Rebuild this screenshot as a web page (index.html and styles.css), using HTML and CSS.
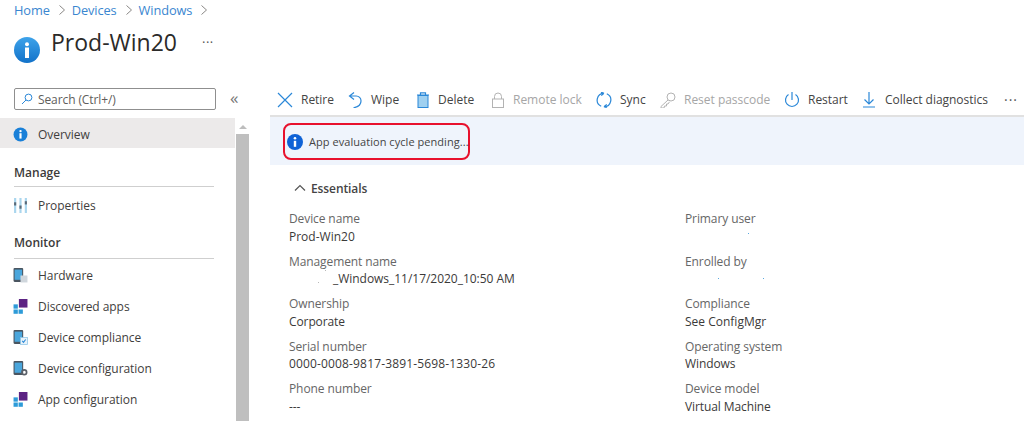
FILE: index.html
```html
<!DOCTYPE html>
<html lang="en">
<head>
<meta charset="utf-8">
<title>Prod-Win20</title>
<link rel="stylesheet" href="styles.css">
</head>
<body>
<header class="top">
  <nav class="crumbs">
    <a>Home</a><svg class="chev" viewBox="0 0 8 12"><path d="M1.5 1.5 6.5 6l-5 4.5"/></svg>
    <a>Devices</a><svg class="chev" viewBox="0 0 8 12"><path d="M1.5 1.5 6.5 6l-5 4.5"/></svg>
    <a>Windows</a><svg class="chev" viewBox="0 0 8 12"><path d="M1.5 1.5 6.5 6l-5 4.5"/></svg>
  </nav>
  <div class="title-row">
    <svg class="title-icon" viewBox="0 0 26 26"><defs><linearGradient id="g" x1="0" y1="0" x2="0" y2="1"><stop offset="0" stop-color="#3ea3ea"/><stop offset="1" stop-color="#1272c9"/></linearGradient></defs><circle cx="13" cy="13" r="13" fill="url(#g)"/><circle cx="13" cy="7.2" r="2" fill="#fff"/><rect x="11" y="10.5" width="4" height="10.5" fill="#fff"/></svg>
    <h1>Prod-Win20</h1>
    <span class="title-more">···</span>
  </div>
</header>
<div class="columns">
  <aside class="side">
    <div class="search-row">
      <div class="search">
        <svg class="search-ic" viewBox="0 0 12 12"><circle cx="7.5" cy="4.5" r="3.4"/><path d="M5 7 1 11"/></svg>
        <span>Search (Ctrl+/)</span>
      </div>
      <span class="collapse">«</span>
    </div>
    <div class="side-body">
      <div class="menu">
        <div class="item active">
          <svg class="mi" viewBox="0 0 14 14"><circle cx="7" cy="7" r="6.5" fill="#1a80d8"/><circle cx="7" cy="3.8" r="1.1" fill="#fff"/><rect x="6" y="5.8" width="2" height="5" fill="#fff"/></svg>
          <span>Overview</span>
        </div>
        <div class="group first">Manage</div>
        <div class="item lead">
          <svg class="mi" viewBox="0 0 14 14"><g fill="#a9d6ee"><rect x="1" y="0" width="2" height="14"/><rect x="6" y="0" width="2" height="14"/><rect x="11" y="0" width="2" height="14"/></g><g fill="#5a6a78"><rect x="1" y="4" width="2" height="3"/><rect x="6" y="7" width="2" height="3"/><rect x="11" y="3" width="2" height="3"/></g></svg>
          <span>Properties</span>
        </div>
        <div class="group second">Monitor</div>
        <div class="item hw">
          <svg class="mi" viewBox="0 0 14 14"><rect x="0.500" y="0" width="9" height="13" rx="1" fill="#4a5560"/><rect x="1.500" y="1.500" width="7" height="9.500" fill="#4aa6dc"/><rect x="7" y="7" width="6.500" height="6.500" fill="#cfd6dc"/></svg>
          <span>Hardware</span>
        </div>
        <div class="item tight">
          <svg class="mi" viewBox="0 0 14 14"><rect x="5.5" y="0" width="8" height="8" fill="#5c2383"/><g fill="#2d9bd8"><rect x="0.5" y="5" width="4" height="4"/><rect x="0.5" y="9.8" width="4" height="4"/><rect x="5.2" y="9.8" width="4" height="4"/></g></svg>
          <span>Discovered apps</span>
        </div>
        <div class="item tight">
          <svg class="mi" viewBox="0 0 14 14"><rect x="0.500" y="0" width="9" height="13" rx="1" fill="#4a5560"/><rect x="1.500" y="1.500" width="7" height="9.500" fill="#4aa6dc"/><rect x="7" y="7" width="6.500" height="6.500" fill="#e8f3fa" stroke="#8cc4e6" stroke-width=".7"/><path d="M8.6 10.2l1.2 1.3 2-2.6" fill="none" stroke="#2b88d8"/></svg>
          <span>Device compliance</span>
        </div>
        <div class="item tight">
          <svg class="mi" viewBox="0 0 14 14"><rect x="0.500" y="0" width="9" height="13" rx="1" fill="#4a5560"/><rect x="1.500" y="1.500" width="7" height="9.500" fill="#4aa6dc"/><circle cx="10.5" cy="10.5" r="2.2" fill="none" stroke="#5a6068" stroke-width="1.6"/></svg>
          <span>Device configuration</span>
        </div>
        <div class="item tight">
          <svg class="mi" viewBox="0 0 14 14"><rect x="5.5" y="0" width="8" height="8" fill="#5c2383"/><g fill="#2d9bd8"><rect x="0.5" y="5" width="4" height="4"/><rect x="0.5" y="9.8" width="4" height="4"/><rect x="5.2" y="9.8" width="4" height="4"/></g></svg>
          <span>App configuration</span>
        </div>
      </div>
      <div class="scrollbar">
        <div class="arrow"></div>
        <div class="thumb"></div>
      </div>
    </div>
  </aside>
  <main class="main">
    <div class="toolbar">
      <div class="cmd c1"><svg class="ic" viewBox="0 0 16 16"><path class="b" d="M1 1l14 14M15 1 1 15"/></svg><span>Retire</span></div>
      <div class="cmd c2"><svg class="ic" viewBox="0 0 16 16"><path class="b" d="M7 0.500 2.500 4l4.500 3.500M2.500 4H9a4.800 4.800 0 0 1 5 5c0 3.500-3 6-7.500 6.800"/></svg><span>Wipe</span></div>
      <div class="cmd c3"><svg class="ic" viewBox="0 0 16 16"><rect x="4" y="3.500" width="10" height="12" fill="#9fd0f0" stroke="#2b88d8"/><path class="b" d="M3 3h12M6.500 3V.8h5V3"/></svg><span>Delete</span></div>
      <div class="cmd off c4"><svg class="ic" viewBox="0 0 16 16"><rect x="3.500" y="7" width="11" height="8.500" class="g"/><path class="g" d="M5.500 7V4.500a3.500 3.500 0 0 1 7 0V7"/></svg><span>Remote lock</span></div>
      <div class="cmd c5"><svg class="ic" viewBox="0 0 16 16"><path class="b" d="M8 1.300A6.800 6.800 0 0 0 5.200 14.300M8 1.300 5 .1M8 1.300 5.300 3.600M8 14.700A6.800 6.800 0 0 0 10.800 1.700M8 14.700 11 15.900M8 14.700 10.700 12.400"/></svg><span>Sync</span></div>
      <div class="cmd off c6"><svg class="ic" viewBox="0 0 16 16"><circle cx="11" cy="5" r="4" class="g"/><path class="g" d="M8 8 1 14.500V16h3l.5-2H6.500v-2H8l1.500-2.200"/></svg><span>Reset passcode</span></div>
      <div class="cmd c7"><svg class="ic" viewBox="0 0 16 16"><path class="b" d="M8 0v8M4.500 2.500a6.500 6.500 0 1 0 7 0"/></svg><span>Restart</span></div>
      <div class="cmd c8"><svg class="ic" viewBox="0 0 16 16"><path class="b" d="M8 0v11.500M3.500 7.500 8 12l4.500-4.500M2 15h12"/></svg><span>Collect diagnostics</span></div>
      <span class="more">···</span>
    </div>
    <div class="banner">
      <div class="pending">
        <svg class="info" viewBox="0 0 16 16"><circle cx="8" cy="8" r="8" fill="#0f62d6"/><circle cx="8" cy="4.300" r="1.300" fill="#fff"/><rect x="6.800" y="6.800" width="2.400" height="6" fill="#fff"/></svg>
        <span>App evaluation cycle pending...</span>
      </div>
    </div>
    <div class="ess-head">
      <svg class="caret" viewBox="0 0 12 8"><path d="M1 6.500 6 1.500l5 5"/></svg>
      <span>Essentials</span>
    </div>
    <div class="ess">
      <div class="field"><div class="k">Device name</div><div class="v wide">Prod-Win20</div></div>
      <div class="field"><div class="k">Primary user</div><div class="v"><span class="speck s1"></span></div></div>
      <div class="field"><div class="k">Management name</div><div class="v indent"><span class="speck s4"></span><span class="speck s5"></span>_Windows_11/17/2020_10:50 AM</div></div>
      <div class="field"><div class="k">Enrolled by</div><div class="v"><span class="speck s2"></span><span class="speck s3"></span></div></div>
      <div class="field"><div class="k">Ownership</div><div class="v">Corporate</div></div>
      <div class="field"><div class="k">Compliance</div><div class="v wide">See ConfigMgr</div></div>
      <div class="field"><div class="k">Serial number</div><div class="v serial">0000-0008-9817-3891-5698-1330-26</div></div>
      <div class="field"><div class="k">Operating system</div><div class="v">Windows</div></div>
      <div class="field"><div class="k">Phone number</div><div class="v">---</div></div>
      <div class="field"><div class="k">Device model</div><div class="v">Virtual Machine</div></div>
    </div>
  </main>
</div>
</body>
</html>
```
FILE: styles.css
```css
* { box-sizing: border-box; }
html, body { margin: 0; height: 421px; overflow: hidden; background: #fff; }
body { font-family: "Open Sans", "Noto Sans", sans-serif; font-size: 12px; color: #323130; letter-spacing: -0.1px; }

.top { height: 85px; padding: 0 0 0 14px; }
.crumbs { display: flex; align-items: center; height: 20px; font-size: 12.800px; color: #3a86d0; }
.chev { width: 8px; height: 12px; margin: 0 6px 0 8px; fill: none; stroke: #8a8886; stroke-width: 1; }
.title-row { display: flex; align-items: flex-start; margin-top: 7px; position: relative; height: 50px; }
.title-icon { width: 26px; height: 26px; margin-top: 10px; }
h1 { margin: 0 0 0 11px; font-size: 23px; font-weight: 400; line-height: 30px; color: #2b2a29; letter-spacing: 0; }
.title-more { margin-left: 25px; font-size: 13px; line-height: 30px; color: #555; letter-spacing: 0.5px; }

.columns { display: flex; height: 336px; }
.side { width: 270px; flex: none; display: flex; flex-direction: column; }
.search-row { height: 33px; padding: 3px 0 0 14px; display: flex; align-items: flex-start; }
.search { width: 202px; height: 22px; border: 1px solid #8f8f8f; border-radius: 2px; display: flex; align-items: center; padding-left: 6px; color: #605e5c; }
.search-ic { width: 12px; height: 12px; margin-right: 5px; fill: none; stroke: #2b88d8; stroke-width: 1; }
.collapse { margin-left: 14px; font-size: 17px; line-height: 20px; color: #777; }
.side-body { display: flex; height: 303px; }
.menu { width: 235px; flex: none; letter-spacing: -0.050px; }
.item { height: 30px; display: flex; align-items: center; padding-left: 14px; color: #3f3e3d; }
.item.tight { height: 31px; }
.item.lead { height: 36px; }
.item.hw { height: 32px; }
.item.active { background: #eceaea; padding-top: 2px; }
.mi { width: 15px; height: 15px; margin: 0 10px 0 -1px; flex: none; }
.group { height: 30px; line-height: 16px; font-weight: 600; color: #3b3a39; border-bottom: 1px solid #cfcfcf; letter-spacing: 0; margin: 0 21px 0 14px; }
.group.first { margin-top: 9px; padding-top: 8px; }
.group.second { margin-top: 6px; padding-top: 6px; }
.scrollbar { width: 13px; margin-left: 1px; display: flex; flex-direction: column; background: #fff; }
.arrow { width: 0; height: 0; margin: 7px auto 5px; border: 4px solid transparent; border-top: 0; border-bottom: 4px solid #bdbdbd; }
.thumb { flex: 1; background: #bfbfbf; }

.main { flex: 1; min-width: 0; }
.toolbar { height: 32px; display: flex; align-items: center; border-bottom: 2px solid #e1e1e1; padding: 0 0 1px 7px; white-space: nowrap; letter-spacing: -0.020px; }
.cmd { display: flex; align-items: center; color: #444; flex: none; }
.cmd.off { color: #a6a6a6; }
.ic { width: 16px; height: 16px; margin-right: 8px; fill: none; flex: none; }
.b { fill: none; stroke: #2b88d8; stroke-width: 1.2; }
.g { fill: none; stroke: #b3b3b3; stroke-width: 1; }
.c1 { width: 70px; }
.c2 { width: 67px; }
.c3 { width: 75px; }
.c4 { width: 107px; }
.c5 { width: 64px; }
.c6 { width: 124px; }
.c7 { width: 77px; }
.c8 { width: 143px; }
.more { color: #555; font-size: 14px; letter-spacing: 1px; }

.banner { height: 48px; background: #eff4fc; padding: 6px 0 0 13px; }
.pending { width: 187px; height: 37px; border: 2px solid #e8112d; border-radius: 8px; display: flex; align-items: center; padding-left: 2px; color: #444; font-size: 11px; white-space: nowrap; letter-spacing: 0.050px; }
.info { width: 16px; height: 16px; margin-right: 6px; flex: none; }

.ess-head { display: flex; align-items: center; height: 16px; margin: 15px 0 0 24px; font-weight: 600; color: #444; letter-spacing: -0.1px; }
.caret { width: 12px; height: 8px; margin-right: 5px; fill: none; stroke: #555; stroke-width: 1.2; }
.ess { display: grid; grid-template-columns: 396px 1fr; padding: 14px 0 0 19px; }
.field { height: 42.500px; }
.k { height: 17.500px; line-height: 18px; color: #666; }
.v { height: 18px; line-height: 18px; color: #3b3a39; position: relative; }
.v.wide { letter-spacing: 0; }
.v.serial { letter-spacing: 0.150px; }
.v.indent { padding-left: 44px; letter-spacing: -0.030px; }
.speck { position: absolute; width: 1px; height: 1px; background: #5aa9e0; top: 5px; }
.s1 { left: 63px; }
.s2 { left: 33px; top: 8px; }
.s3 { left: 78px; top: 8px; }
.s4 { left: 36px; top: 0; background: #b9b9b9; }
.s5 { left: 29px; top: 12px; background: #b9b9b9; }
```
